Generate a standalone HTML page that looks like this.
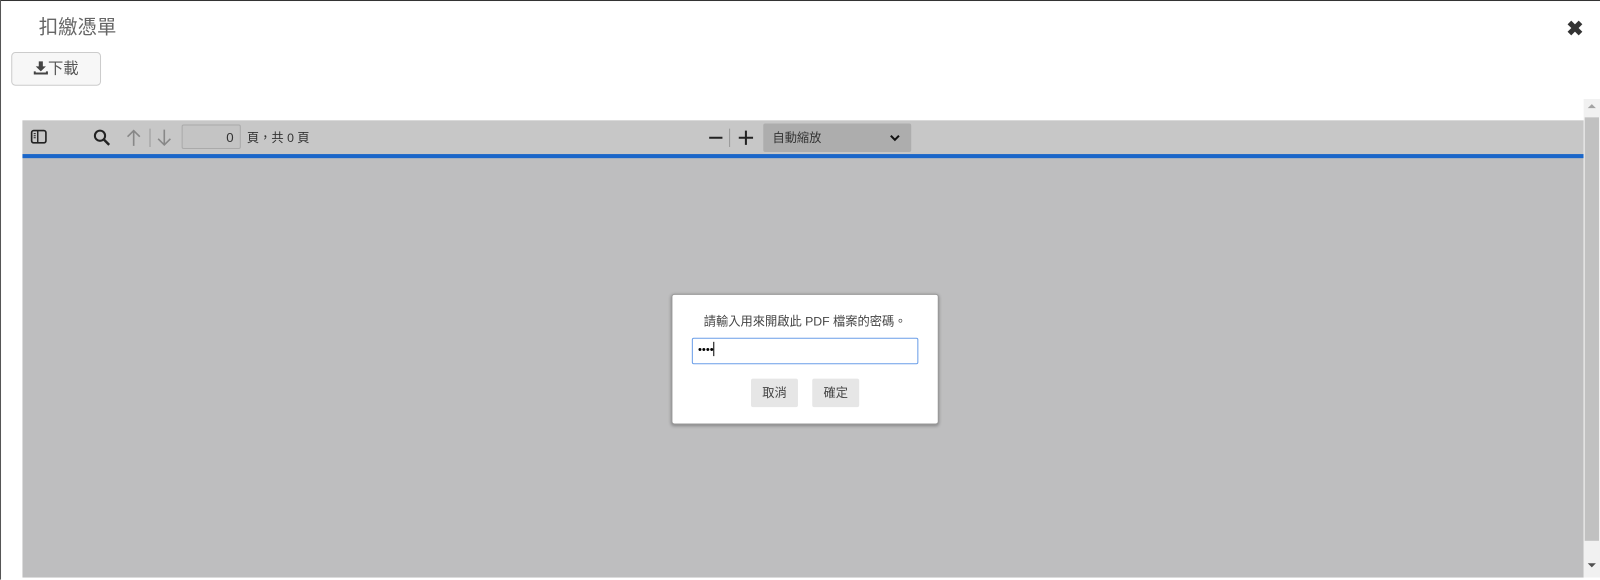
<!DOCTYPE html>
<html><head><meta charset="utf-8"><style>
body{margin:0;width:1600px;height:580px;background:#fff;position:relative;overflow:hidden;font-family:"Liberation Sans","Noto Sans CJK TC",sans-serif}
#w{position:absolute;left:0;top:0;width:1568px;height:568px;transform:scale(1.0204);transform-origin:0 0}
.a{position:absolute}
</style></head><body><div id="w">
<div class="a" style="left:0;top:0;width:1568px;height:1px;background:#333"></div>
<div class="a" style="left:0;top:0;width:1px;height:568px;background:#555"></div>
<div class="a" style="left:38px;top:12px;font-size:19px;color:#666">扣繳憑單</div>
<div class="a" style="left:1535px;top:16px;font-size:20px;font-weight:bold;color:#333">✖</div>
<div class="a" style="left:11px;top:51px;width:86px;height:31px;border:1px solid #ccc;border-radius:4px;background:#f7f7f7;font-size:15px;color:#555;line-height:31px;text-align:center">
<svg width="14" height="13" viewBox="0 0 14 13" style="vertical-align:-1px"><path d="M5 0h4v5h3l-5 5-5-5h3z M0 10h2v1h10v-1h2v3h-14z" fill="#444"/></svg>下載</div>
<div class="a" style="left:22px;top:118px;width:1530px;height:448px;background:#bebebf"></div>
<div class="a" style="left:22px;top:118px;width:1530px;height:33px;background:#c7c7c7"></div>
<div class="a" style="left:22px;top:151px;width:1530px;height:4px;background:#1a66c9"></div>
<svg class="a" style="left:28px;top:125px" width="20" height="20" viewBox="0 0 20 20"><rect x="3" y="3" width="14" height="12" rx="2" fill="none" stroke="#222" stroke-width="1.6"/><line x1="9" y1="3" x2="9" y2="15" stroke="#222" stroke-width="1.4"/><path d="M5 6h2M5 8h2M5 10h2" stroke="#222"/></svg>
<svg class="a" style="left:90px;top:125px" width="20" height="20" viewBox="0 0 20 20"><circle cx="8" cy="8" r="5" fill="none" stroke="#222" stroke-width="2"/><line x1="12" y1="12" x2="17" y2="17" stroke="#222" stroke-width="2.4"/></svg>
<svg class="a" style="left:122px;top:124px" width="60" height="22" viewBox="0 0 60 22"><path d="M9 19V4M3 10l6-6 6 6" fill="none" stroke="#888" stroke-width="1.6"/><line x1="25" y1="2" x2="25" y2="20" stroke="#999"/><path d="M39 3v15M33 12l6 6 6-6" fill="none" stroke="#888" stroke-width="1.6"/></svg>
<div class="a" style="left:178px;top:122px;height:24px;border:1px solid #aaa;border-radius:2px;background:#c4c4c4;font-size:13px;color:#333;text-align:right;line-height:24px;box-sizing:border-box;padding-right:6px;width:58px">0</div>
<div class="a" style="left:242px;top:126px;font-size:12px;color:#333">頁，共 0 頁</div>
<svg class="a" style="left:692px;top:124px" width="50" height="22" viewBox="0 0 50 22"><path d="M3 11h13" stroke="#222" stroke-width="2"/><line x1="23" y1="2" x2="23" y2="20" stroke="#999"/><path d="M32 11h14M39 4v14" stroke="#222" stroke-width="2"/></svg>
<div class="a" style="left:748px;top:121px;width:145px;height:28px;background:#adadad;border-radius:2px;font-size:12px;color:#333;line-height:28px;padding-left:9px;box-sizing:border-box">自動縮放<svg style="position:absolute;left:124px;top:11px" width="10" height="7" viewBox="0 0 10 7"><path d="M1 1l4 4 4-4" fill="none" stroke="#111" stroke-width="2"/></svg></div>
<div class="a" style="left:1552px;top:97px;width:16px;height:469px;background:#f1f1f1"></div>
<div class="a" style="left:1553px;top:115px;width:14px;height:415px;background:#c1c1c1"></div>
<div class="a" style="left:1556px;top:102px;width:0;height:0;border:4px solid transparent;border-bottom:4px solid #a3a3a3;border-top:0"></div>
<div class="a" style="left:1556px;top:552px;width:0;height:0;border:4px solid transparent;border-top:4px solid #505050;border-bottom:0"></div>
<div class="a" style="left:658px;top:288px;width:262px;height:128px;background:#fff;border:1px solid #999;border-radius:3px;box-sizing:border-box;box-shadow:0 1px 3px rgba(0,0,0,.3)"></div>
<div class="a" style="left:658px;top:306px;width:262px;text-align:center;font-size:12px;color:#444">請輸入用來開啟此 PDF 檔案的密碼。</div>
<div class="a" style="left:678px;top:331px;width:222px;height:26px;border:1px solid #6a9ee8;border-radius:2px;box-sizing:border-box;font-size:11px;line-height:22px;padding-left:5px;color:#000">••••<span style="display:inline-block;width:1px;height:14px;background:#000;vertical-align:-3px"></span></div>
<div class="a" style="left:736px;top:371px;width:46px;height:28px;background:#e6e6e6;border-radius:2px;font-size:12px;color:#444;text-align:center;line-height:28px">取消</div>
<div class="a" style="left:796px;top:371px;width:46px;height:28px;background:#e6e6e6;border-radius:2px;font-size:12px;color:#444;text-align:center;line-height:28px">確定</div>
</div></body></html>
